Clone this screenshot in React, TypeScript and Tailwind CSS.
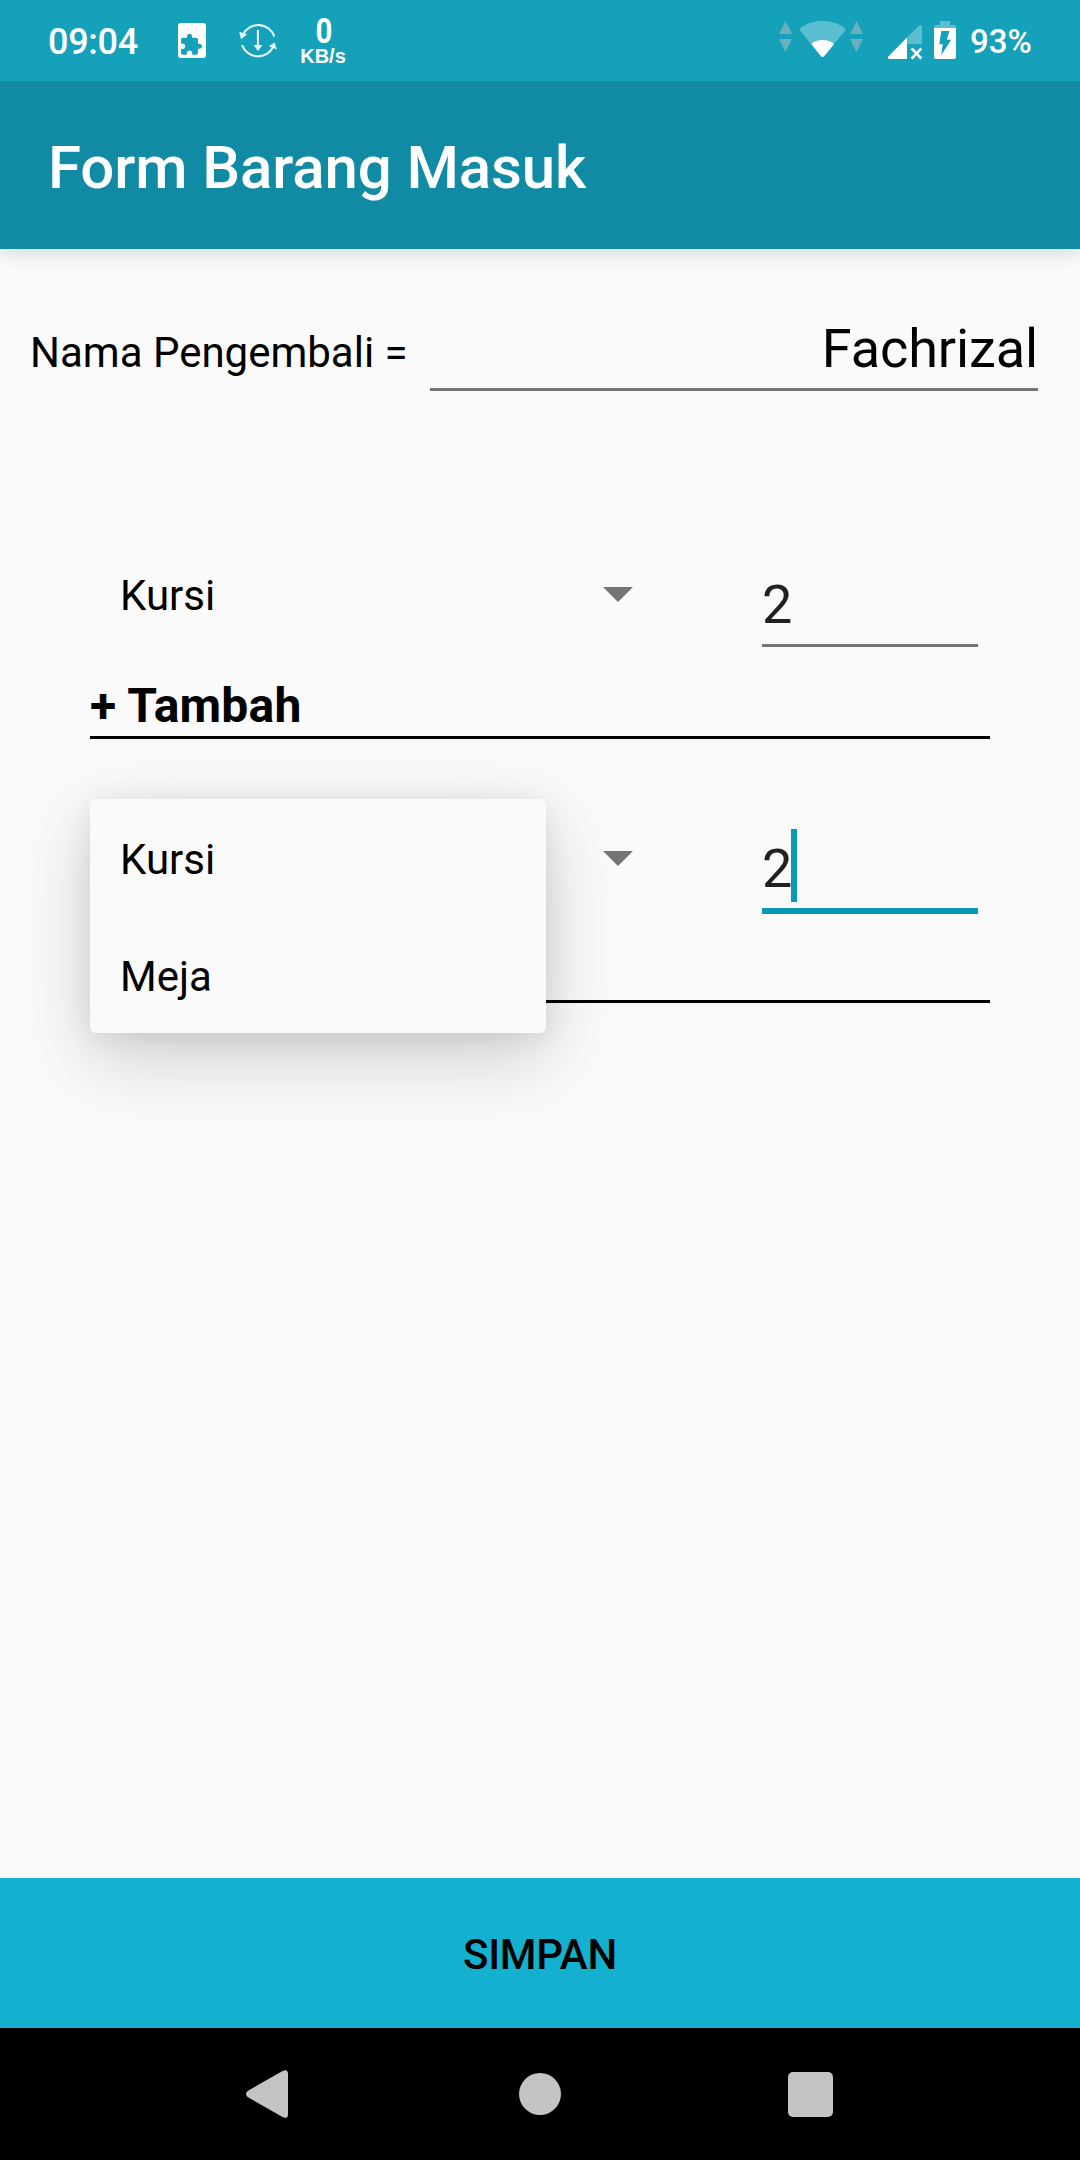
import type { ReactNode } from "react";

function StatusBar() {
  return (
    <header className="relative z-10 flex h-[81px] shrink-0 bg-[#15a1ba] pl-12 text-white">
      <div className="w-[130px] pt-[2px] text-[36px] leading-[81px] font-medium tracking-[-0.3px]">09:04</div>
      <svg className="h-[81px] w-7" viewBox="178 0 28 81">
        <rect x="178" y="23" width="28" height="35" rx="3" fill="#fff" />
        <path
          transform="translate(179 32.7)"
          fill="#15a1ba"
          d="M20.5 11H19V7c0-1.1-.9-2-2-2h-4V3.5C13 2.12 11.88 1 10.5 1S8 2.12 8 3.5V5H4c-1.1 0-1.99.9-1.99 2v3.8H3.5c1.49 0 2.7 1.21 2.7 2.7s-1.21 2.7-2.7 2.7H2V20c0 1.1.9 2 2 2h3.8v-1.5c0-1.49 1.21-2.7 2.7-2.7 1.49 0 2.7 1.21 2.7 2.7V22H17c1.1 0 2-.9 2-2v-4h1.5c1.38 0 2.5-1.12 2.5-2.5S21.88 11 20.5 11z"
        />
      </svg>
      <svg className="ml-[33px] h-[81px] w-[39px] opacity-90" viewBox="239 0 39 81">
        <g fill="none" stroke="#fff" strokeWidth="2.1">
          <path d="M243 34.5A17 17 0 0 1 274.3 36.5" />
          <path d="M242 45A17 17 0 0 0 273.2 47" />
          <path d="M257.9 30V46" />
        </g>
        <path fill="#fff" d="M239.2 31.8 247 34.6 241 39.2ZM274.6 42.6 277 49.4 268.8 46.2ZM253.6 45H262.4L258 51.2Z" />
      </svg>
      <div className="ml-[22px] flex w-[46px] flex-col items-center pt-[14px] font-bold">
        <span className="ml-[2px] scale-x-[0.84] text-[35px] leading-[35px]">0</span>
        <span className="font-['Liberation_Sans',sans-serif] text-[20px] leading-[14px]">KB/s</span>
      </div>
      <svg className="ml-[433px] h-[81px] w-[84px]" viewBox="779 0 84 81">
        <path fill="#6aafbd" d="M779 34 785.5 21 792 34ZM779 39H792L785.5 52.3ZM850 34 856.5 21 863 34ZM850 39H863L856.5 52.3Z" />
        <path
          fill="#5bbdd0"
          d="M800.6 31.2C799.5 29.9 799.7 28.4 801 27.4C807 23.3 814 21 822.5 21S838 23.3 844.2 27.4C845.7 28.4 845.9 29.9 844.8 31.2L833.5 44.4H811.5Z"
        />
        <path fill="#fff" d="M811.4 44.2C814 41.4 818 40 822.5 40S831 41.4 834 44.2L824.4 56.1C823.2 57.4 821.9 57.4 820.8 56.1Z" />
      </svg>
      <svg className="ml-[25px] h-[81px] w-[34px]" viewBox="888 0 34 81">
        <path fill="#5bbdd0" d="M907 37.5 918.8 25.9C920.4 24.4 922 25 922 27V44H907Z" />
        <path fill="#fff" d="M907 37.5V59H889.6C888 59 887.4 57.6 888.6 56.2Z" />
        <path stroke="#fff" strokeWidth="2.8" d="M911.6 48.4 921.4 58.6M921.4 48.4 911.6 58.6" />
      </svg>
      <svg className="ml-3 h-[81px] w-[22px]" viewBox="934 0 22 81">
        <path fill="#5bbdd0" d="M940 21H950V25H954Q956 25 956 27V28H934V27Q934 25 936 25H940Z" />
        <path fill="#fff" d="M934 28H956V56.5Q956 59 953.5 59H936.5Q934 59 934 56.5Z" />
        <path fill="#15a1ba" d="M941.3 31H949.4L946.8 39.8H951.2L941.2 55.3L942.7 44.2H939.3Z" />
      </svg>
      <div className="ml-[14px] pt-[1px] text-[33px] leading-[81px] font-medium">93%</div>
    </header>
  );
}

type ItemProps = {
  name: string;
  quantity: string;
  focused?: boolean;
  children?: ReactNode;
};

function ItemEntry({ name, quantity, focused, children }: ItemProps) {
  return (
    <section className="relative">
      <div className="flex h-[99px] justify-between pr-3">
        <div className="flex h-[93px] w-[543px] items-center justify-between pl-[30px]">
          <span className="pt-[3px] text-[42px] leading-[50px]">{!children && name}</span>
          <svg className="h-[15px] w-[30px]" viewBox="0 0 30 15">
            <path d="M0 0H30L15 15Z" fill="#757575" />
          </svg>
        </div>
        <div
          className={
            focused
              ? "relative mt-[25px] h-[77px] w-[216px] border-b-6 border-[#0798b3]"
              : "relative mt-[25px] h-[74px] w-[216px] border-b-3 border-[#757575]"
          }
        >
          <span className="block text-[54px] leading-[64px] text-[#212121]">{quantity}</span>
          {focused && <span className="absolute -top-2 left-[29px] h-[73px] w-1.5 bg-[#0798b3]" />}
        </div>
      </div>
      <div className="mt-[31px] h-[61px] border-b-3 border-black text-[48px] leading-[56px] font-bold tracking-[0.2px]">
        {!children && "+ Tambah"}
      </div>
      {children}
    </section>
  );
}

function Dropdown({ options }: { options: string[] }) {
  return (
    <ul className="absolute -top-[13px] left-0 w-[456px] rounded-[6px] bg-[#fafafa] shadow-[0_24px_76px_rgba(0,0,0,0.18),0_4px_28px_rgba(0,0,0,0.08)]">
      {options.map((option) => (
        <li key={option} className="h-[117px] pt-[2px] pl-[30px] text-[42px] leading-[117px]">
          {option}
        </li>
      ))}
    </ul>
  );
}

function NavigationBar() {
  return (
    <nav className="flex h-[132px] shrink-0 items-center justify-between bg-black pr-[247px] pl-[246px]">
      <svg className="h-12 w-[42px]" viewBox="0 0 42 48">
        <path fill="#c4c4c4" d="M1.6 21 36.5 .9Q42-1.6 42 4V44Q42 49.6 36.5 47.1L1.6 27Q-1.6 24 1.6 21Z" />
      </svg>
      <span className="ml-1 size-[42px] rounded-full bg-[#c4c4c4]" />
      <span className="size-[45px] rounded-[5px] bg-[#c4c4c4]" />
    </nav>
  );
}

export default function App() {
  return (
    <div className="flex h-[2160px] w-[1080px] flex-col overflow-hidden bg-[#fafafa] font-[Roboto,sans-serif] text-black">
      <StatusBar />
      <div className="h-[168px] shrink-0 bg-[#118ba3] pt-[5px] pl-12 text-[60px] leading-[163px] font-medium tracking-[-0.12px] text-white shadow-[0_4px_18px_rgba(0,0,0,0.14)]">
        Form Barang Masuk
      </div>
      <main className="flex-1">
        <div className="flex items-baseline justify-between pt-[68px] pr-[42px] pl-[30px]">
          <label className="text-[42px] leading-[50px]">Nama Pengembali =</label>
          <div className="h-[74px] w-[608px] border-b-3 border-[#757575] text-right text-[54px] leading-[64px] tracking-[-0.1px]">
            Fachrizal
          </div>
        </div>
        <div className="mt-[157px] flex flex-col gap-[73px] px-[90px]">
          <ItemEntry name="Kursi" quantity="2" />
          <ItemEntry name="Kursi" quantity="2" focused>
            <Dropdown options={["Kursi", "Meja"]} />
          </ItemEntry>
        </div>
      </main>
      <button className="h-[150px] shrink-0 bg-[#14b0cf] pt-[4px] text-[42px] leading-[146px] font-medium tracking-[-0.2px]">
        SIMPAN
      </button>
      <NavigationBar />
    </div>
  );
}
